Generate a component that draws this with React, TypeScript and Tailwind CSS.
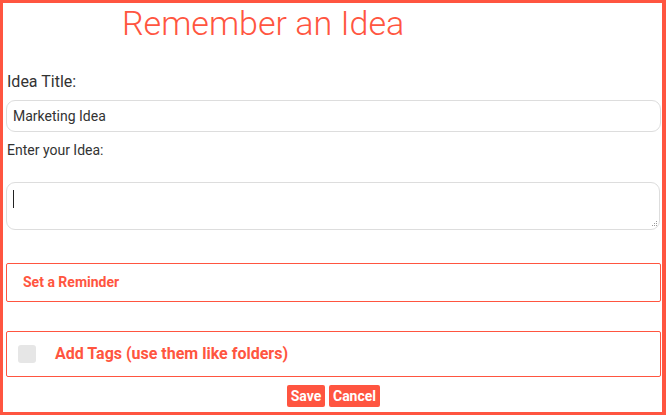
import React from "react";

export default function App() {
  return (
    <div
      className="w-[666px] h-[415px] box-border border-[3px] border-r-4 border-[#ff5540] bg-white pl-[3px] pr-[1px] overflow-hidden"
      style={{ fontFamily: "Roboto, 'Liberation Sans', sans-serif" }}
    >
      <div className="h-[40px] leading-[40px] text-[34px] font-light text-[#ff5540] pl-[116px] whitespace-nowrap">
        Remember an Idea
      </div>
      <div className="mt-[29px] h-[20px] leading-[20px] text-[16px] text-[#333] pl-[1px]">
        Idea Title:
      </div>
      <div className="mt-[8px] h-[32px] rounded-[9px] border border-[#dddddd] flex items-center pl-[6px] text-[14px] text-[#333]">
        Marketing Idea
      </div>
      <div className="mt-[10px] h-[16px] leading-[16px] text-[14px] text-[#333] pl-[1px]">
        Enter your Idea:
      </div>
      <div className="mt-[24px] h-[48px] rounded-[9px] border border-[#dddddd] relative mr-[1px]">
        <div className="absolute left-[6px] top-[7px] w-px h-[18px] bg-[#222]" />
        <svg
          className="absolute right-[1px] bottom-[1px]"
          width="7"
          height="7"
          viewBox="0 0 7 7"
        >
          <rect x="5" y="0" width="1" height="1" fill="#999" />
          <rect x="3" y="2" width="1" height="1" fill="#999" />
          <rect x="5" y="2" width="1" height="1" fill="#999" />
          <rect x="1" y="4" width="1" height="1" fill="#999" />
          <rect x="3" y="4" width="1" height="1" fill="#999" />
          <rect x="5" y="4" width="1" height="1" fill="#999" />
        </svg>
      </div>
      <div className="mt-[33px] h-[39px] border border-[#ff5540] rounded-[2px] flex items-center pl-[16px] text-[14px] font-bold text-[#ff5540]">
        Set a Reminder
      </div>
      <div className="mt-[29px] h-[46px] border border-[#ff5540] rounded-[2px] flex items-center pl-[11px]">
        <div className="w-[18px] h-[18px] rounded-[3px] bg-[#e6e6e6]" />
        <span className="ml-[19px] text-[16px] font-bold text-[#ff5540]">
          Add Tags (use them like folders)
        </span>
      </div>
      <div className="mt-[8px] flex justify-center gap-[4px]">
        <button className="w-[38px] h-[22px] rounded-[2px] bg-[#ff5540] text-white text-[14px] font-bold leading-[22px]">
          Save
        </button>
        <button className="w-[51px] h-[22px] rounded-[2px] bg-[#ff5540] text-white text-[14px] font-bold leading-[22px]">
          Cancel
        </button>
      </div>
    </div>
  );
}
